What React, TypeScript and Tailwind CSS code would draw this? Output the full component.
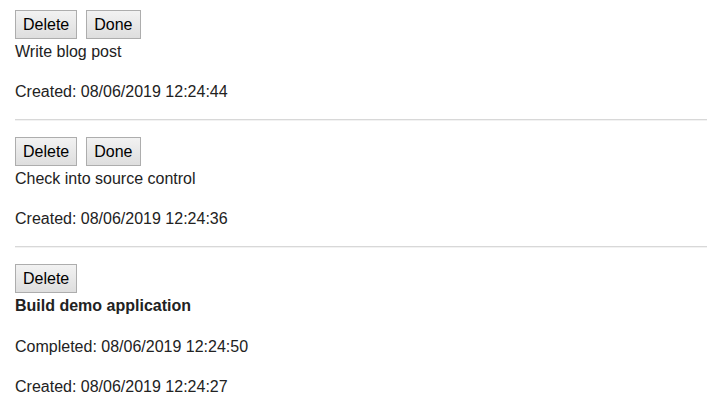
const todos = [
  { id: 1, title: 'Write blog post', created: '08/06/2019 12:24:44', completed: null as string | null },
  { id: 2, title: 'Check into source control', created: '08/06/2019 12:24:36', completed: null as string | null },
  { id: 3, title: 'Build demo application', created: '08/06/2019 12:24:27', completed: '08/06/2019 12:24:50' },
];

const Btn = ({ label }: { label: string }) => (
  <button className="h-[29px] px-[7px] border border-[#adadad] bg-gradient-to-b from-[#f2f2f2] to-[#dedede] text-[16px] leading-[18px] text-black">
    {label}
  </button>
);

export default function App() {
  return (
    <div
      className="min-h-[418px] bg-white pl-[15px] pt-[10px] text-[16px] leading-[18px] text-[#222]"
      style={{ fontFamily: '"Liberation Sans", Arial, sans-serif' }}
    >
      {todos.map((todo, i) => (
        <div key={todo.id} className={i > 0 ? 'mt-[16px]' : ''}>
          <div className="flex gap-[9px]">
            <Btn label="Delete" />
            {!todo.completed && <Btn label="Done" />}
          </div>
          <div className={`mt-[4px] ${todo.completed ? 'font-bold' : ''}`}>{todo.title}</div>
          {todo.completed && <p className="mt-[23px]">Completed: {todo.completed}</p>}
          <p className="mt-[22px]">Created: {todo.created}</p>
          {i < todos.length - 1 && (
            <div className="mt-[18px] border-t border-b border-t-[#d8d8d8] border-b-[#f2f2f2]" />
          )}
        </div>
      ))}
    </div>
  );
}
